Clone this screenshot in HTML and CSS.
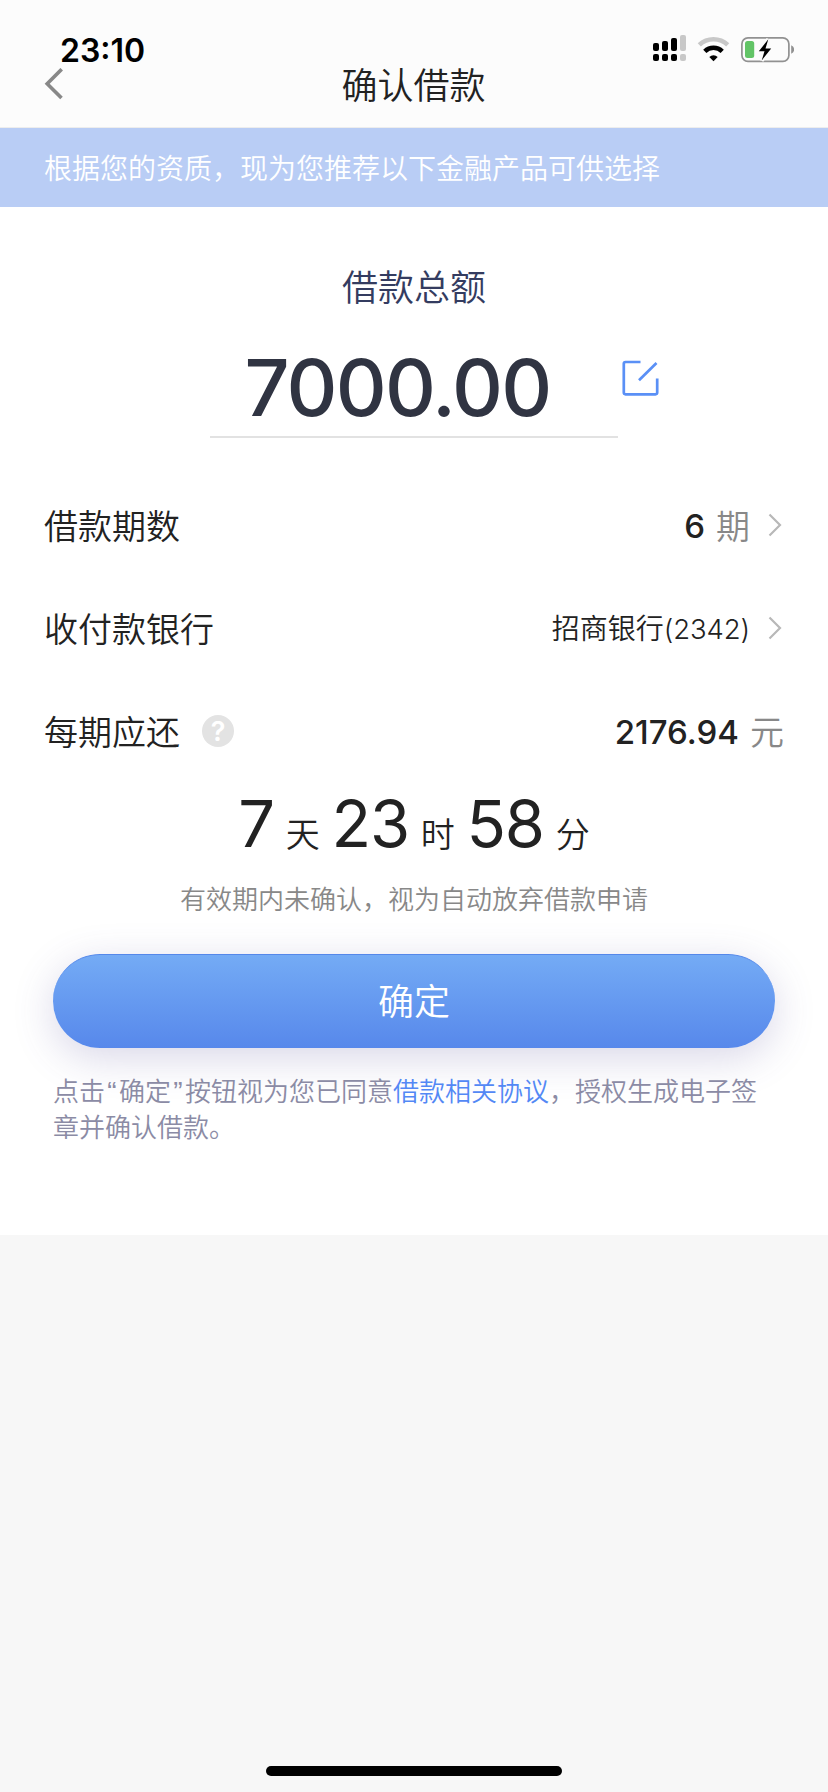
FILE: index.html
```html
<!DOCTYPE html>
<html lang="zh-CN">
<head>
<meta charset="utf-8">
<title>确认借款</title>
<link rel="stylesheet" href="styles.css">
</head>
<body>
<header class="header">
  <div class="status">
    <span class="clock">23:10</span>
    <svg class="status-icons" width="144" height="30" viewBox="650 34 144 30">
      <g fill="#000">
        <rect x="653" y="43" width="6" height="8" rx="2"/><rect x="662" y="41" width="6" height="10" rx="2"/><rect x="671" y="38" width="6" height="13" rx="2"/>
        <rect x="653" y="54" width="6" height="7" rx="2"/><rect x="662" y="54" width="6" height="7" rx="2"/><rect x="671" y="54" width="6" height="7" rx="2"/>
      </g>
      <g fill="#c8c8c8"><rect x="680" y="35" width="6" height="16" rx="2"/><rect x="680" y="54" width="6" height="7" rx="2"/></g>
      <path d="M699.300 44.900a20.500 20.500 0 0 1 28.400 0" fill="none" stroke="#c8c8c8" stroke-width="4.600"/>
      <path d="M704.800 51.300a12.500 12.500 0 0 1 17.400 0" fill="none" stroke="#000" stroke-width="4.600"/>
      <path d="M709.300 57a6.200 6.200 0 0 1 8.400 0L713.500 61.200z" fill="#000"/>
      <rect x="741.900" y="37.900" width="47" height="23.400" rx="6" fill="none" stroke="#919191" stroke-width="1.700"/>
      <path d="M791.200 45.200q3 1.500 3 4.300t-3 4.300z" fill="#919191"/>
      <rect x="745" y="41" width="9.200" height="17" rx="2.500" fill="#62c466"/>
      <path d="M768.300 39.300L758.800 51.300h5.700L761.700 60.500 771.200 48.400h-5.700z" fill="#000" stroke="#fcfcfc" stroke-width="4" paint-order="stroke"/>
    </svg>
  </div>
  <div class="nav">
    <svg class="back" width="20" height="32" viewBox="0 0 20 32"><path d="M17.700 1.200L3.200 15.700L17.500 30" fill="none" stroke="#888" stroke-width="3.600"/></svg>
    <h1 class="nav-title">确认借款</h1>
  </div>
</header>
<p class="notice">根据您的资质，现为您推荐以下金融产品可供选择</p>
<main class="panel">
  <h2 class="amount-label">借款总额</h2>
  <div class="amount-row">
    <div class="amount">7000.00</div>
    <svg class="edit" width="37" height="36" viewBox="0 0 37 36" fill="none" stroke="#5a90f6" stroke-width="2.700"><path d="M18.500 2H3.500Q1.800 2 1.800 3.700V32.600Q1.800 34.300 3.500 34.300H33.500Q35.200 34.300 35.200 32.600V18.500"/><path d="M17 20.300L34.500 3"/></svg>
  </div>
  <div class="rows">
    <div class="row">
      <span>借款期数</span>
      <span class="value"><span class="num">6</span><span class="unit">期</span><svg class="chevron" width="14" height="24" viewBox="0 0 14 24"><path d="M1.500 1.500L12 12L1.500 22.500"/></svg></span>
    </div>
    <div class="row">
      <span>收付款银行</span>
      <span class="value"><span class="bank">招商银行<span class="tail">(2342)</span></span><svg class="chevron" width="14" height="24" viewBox="0 0 14 24"><path d="M1.500 1.500L12 12L1.500 22.500"/></svg></span>
    </div>
    <div class="row">
      <span class="with-help">每期应还<span class="help">?</span></span>
      <span class="value"><span class="num">2176.94</span><span class="unit last">元</span></span>
    </div>
  </div>
  <div class="countdown"><b>7</b><span>天</span><b>23</b><span>时</span><b>58</b><span>分</span></div>
  <p class="hint">有效期内未确认，视为自动放弃借款申请</p>
  <button class="confirm">确定</button>
  <p class="legal">点击<span class="quote">“</span>确定<span class="quote">”</span>按钮视为您已同意<a>借款相关协议</a>，授权生成电子签章并确认借款。</p>
</main>
<footer class="footer"><div class="home-bar"></div></footer>
</body>
</html>
```
FILE: styles.css
```css
* { box-sizing: border-box; }
body {
  margin: 0;
  height: 1792px;
  display: flex;
  flex-direction: column;
  background: #f7f7f7;
  color: #222;
  font-family: Inter, "Noto Sans CJK SC", sans-serif;
  font-weight: 350;
}
h1, h2, p { margin: 0; font-weight: 350; }
svg { display: block; flex: none; }
.header { height: 128px; background: #fcfcfc; border-bottom: 1px solid #ededed; }
.status { height: 66px; padding: 34px 34px 0 60px; display: flex; justify-content: space-between; }
.clock { font-size: 32px; line-height: 33px; font-weight: 600; color: #000; }
.nav { height: 40px; padding: 0 45px 0 44px; display: grid; grid-template-columns: 20px 1fr 20px; align-items: center; }
.back { margin-top: -5px; }
.nav-title { font-size: 36px; line-height: 40px; text-align: center; }
.notice { height: 79px; padding: 2px 44px 0; background: #b9cdf5; color: #fff; font-size: 28px; line-height: 79px; }
.panel { height: 1028px; background: #fff; padding-top: 61px; }
.amount-label { font-size: 36px; line-height: 40px; text-align: center; color: #343c60; }
.amount-row { display: flex; padding-left: 210px; margin-top: 35px; }
.amount { width: 408px; height: 95px; padding-right: 33px; border-bottom: 2px solid #e2e2e2; text-align: center; font-size: 79px; line-height: 88px; font-weight: 500; color: #303442; letter-spacing: -1.8px; }
.edit { margin: 17px 0 0 4px; }
.rows { padding: 37px 45px 0 44px; }
.row { height: 103px; display: flex; justify-content: space-between; align-items: center; font-size: 34px; line-height: 40px; }
.value { display: flex; align-items: center; }
.num { font-size: 33px; font-weight: 500; margin: -2px 11px 0 0; }
.unit { color: #888; }
.unit.last { margin-right: -1px; }
.bank { font-size: 28px; margin-top: -2px; }
.tail { font-size: 27.5px; letter-spacing: -0.1px; }
.chevron { margin: -4px 1px 0 18px; fill: none; stroke: #b8b8b8; stroke-width: 2.200; }
.with-help { display: flex; align-items: center; }
.help { width: 32px; height: 32px; margin: -4px 0 0 22px; border-radius: 50%; background: #e3e3e3; color: #fff; font-size: 27px; line-height: 34px; font-weight: 600; text-align: center; }
.countdown { display: flex; justify-content: center; align-items: baseline; gap: 11.8px; height: 80px; line-height: 80px; font-size: 34px; }
.countdown b { font-size: 65px; font-weight: 400; letter-spacing: -1.2px; }
.hint { margin-top: 16px; text-align: center; color: #888; font-size: 26px; line-height: 40px; }
.confirm { display: block; width: 722px; height: 94px; margin: 34px auto 0; padding: 0; border: 0; border-top: 1px solid #5588ea; border-radius: 47px; background: linear-gradient(#74abf5, #5788eb); box-shadow: 0 10px 40px rgba(80, 75, 150, .22); color: #fff; font: 350 36px/94px Inter, "Noto Sans CJK SC", sans-serif; }
.legal { width: 722px; margin: 26px auto 0; color: #8b8ba5; font-size: 26px; line-height: 36px; }
.quote { display: inline-block; width: 14px; text-align: center; font: 400 28px/24px "Liberation Sans", sans-serif; }
.legal a { color: #5388f5; }
.footer { flex: 1; display: flex; justify-content: center; align-items: flex-end; padding-bottom: 16px; }
.home-bar { width: 296px; height: 10px; border-radius: 5px; background: #000; }
```
